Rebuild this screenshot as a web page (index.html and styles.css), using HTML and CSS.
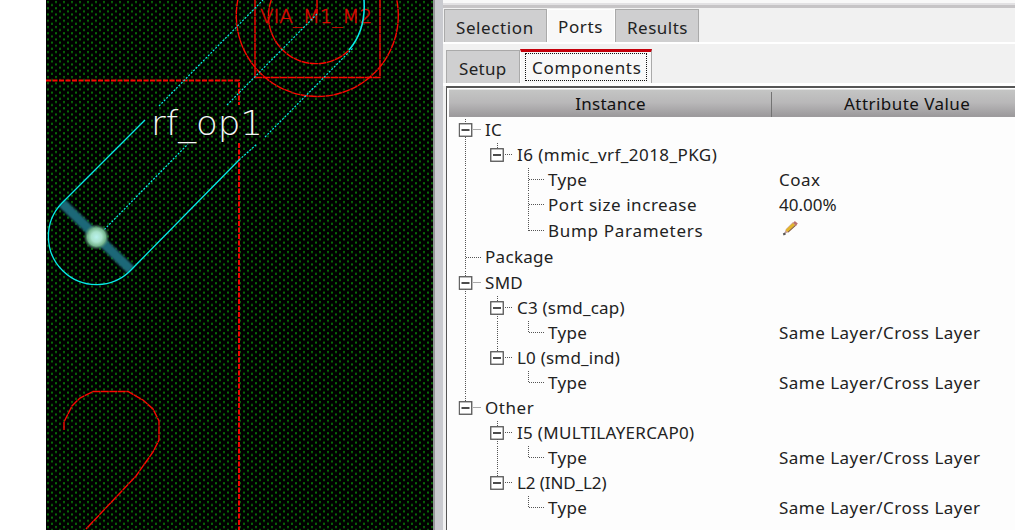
FILE: index.html
```html
<!DOCTYPE html>
<html lang="en">
<head>
<meta charset="utf-8">
<title>Ports</title>
<link rel="stylesheet" href="styles.css">
</head>
<body>
<svg width="0" height="0" class="defs">
  <defs>
    <symbol id="b" viewBox="0 0 28 14" width="28" height="14"><rect x=".75" y=".75" width="12.5" height="12.5" fill="#fff" stroke="#555" stroke-width="1.3"/><path d="M3 7H11" stroke="#111" stroke-width="1.5"/><path class="dot" d="M15 6.5H22"/></symbol>
  </defs>
</svg>
<div class="app">
  <svg class="canvas" width="387" height="530" viewBox="46 0 387 530">
    <defs>
      <pattern id="dots" x="46" y="300" width="8" height="6.25" patternUnits="userSpaceOnUse">
        <rect x="1" y="1" width="2" height="2" fill="#086c08"/><rect x="5" y="4.1" width="2" height="2" fill="#086c08"/>
      </pattern>
      <radialGradient id="ball"><stop offset="0" stop-color="#b9f2ee"/><stop offset=".4" stop-color="#a9e2cc"/><stop offset=".7" stop-color="#75b58e"/><stop offset="1" stop-color="#3f7a66" stop-opacity="0"/></radialGradient>
      <filter id="soft" x="-20%" y="-20%" width="140%" height="140%"><feGaussianBlur stdDeviation="1.3"/></filter>
    </defs>
    <rect x="46" width="387" height="530" fill="#000"/>
    <rect x="46" width="387" height="530" fill="url(#dots)"/>
    <g class="red">
      <path class="edge" d="M46 80.5H239V105M239 143V530"/>
      <circle cx="317.3" cy="15.5" r="81"/>
      <path d="M255 0V77.5H380V0M317 0V14M271.3 0A47.5 47.5 0 0 0 349 50.3"/>
      <path d="M64 430V422L72 406L80 398L93 391.5H128L143 400L153 409L159 421V440L153 452L136 476L86 529"/>
      <text class="via" x="260" y="22.5" textLength="112" lengthAdjust="spacingAndGlyphs">VIA_M1_M2</text>
    </g>
    <path d="M62 203L131 270" stroke="#1d6878" stroke-width="9.5" filter="url(#soft)"/>
    <g class="cyan">
      <path d="M145 120L62 203A47.3 47.3 0 0 0 131 270L239 160"/>
      <path d="M364 0Q366 30 349 50" stroke-width="1.6"/>
      <path class="dash" d="M159 106L263 0M97 237L188 144M227 105L317 14M239 160L257 144M265 137L353 48"/>
    </g>
    <circle cx="96.5" cy="237" r="13" fill="url(#ball)"/>
    <text class="net" x="151" y="135" textLength="112" lengthAdjust="spacingAndGlyphs">rf_op1</text>
  </svg>
  <div class="splitter"></div>
  <main class="panel">
    <div class="strip"></div>
    <nav class="tabs"><span class="tab sel">Selection</span><span class="tab ports on">Ports</span><span class="tab res">Results</span></nav>
    <nav class="subtabs"><span class="tab setup">Setup</span><span class="tab comp on"><b>Components</b></span></nav>
    <section class="tree">
      <header><span class="h1">Instance</span><span class="h2">Attribute Value</span></header>
      <div class="row"><svg class="g"><path class="dot" d="M18.5 2V25"/><use href="#b" x="11.5" y="6"/></svg><span class="n0">IC</span></div>
      <div class="row"><svg class="g"><path class="dot" d="M18.5 1V25M50.5 1V6"/><use href="#b" x="43" y="6"/></svg><span class="n1 wide">I6 (mmic_vrf_2018_PKG)</span></div>
      <div class="row"><svg class="g"><path class="dot" d="M18.5 1V25M81.5 1V25M82 12.5H97"/></svg><span class="n2">Type</span><span class="v">Coax</span></div>
      <div class="row"><svg class="g"><path class="dot" d="M18.5 1V25M81.5 1V25M82 12.5H97"/></svg><span class="n2 wider">Port size increase</span><span class="v num">40.00%</span></div>
      <div class="row r27"><svg class="g"><path class="dot" d="M18.5 1V27M81.5 1V14M82 13.5H97"/></svg><span class="n2 widest">Bump Parameters</span><span class="v"><svg class="pen" width="22" height="20" viewBox="0 0 22 20"><path d="M5 15L7 10L14 3L18 6L10 13Z" fill="#c9a29c"/><path d="M7.5 12L15 5" stroke="#e3b52c" stroke-width="3"/><path d="M9 13.2L16.5 6.3" stroke="#75562e" stroke-width="1"/><path d="M15 3L18 5.5" stroke="#bc716e" stroke-width="2.5"/><path d="M4.2 15.5L6.5 14.5" stroke="#555" stroke-width="2"/></svg></span></div>
      <div class="row r26"><svg class="g"><path class="dot" d="M18.5 0V26M19 13.5H34"/></svg><span class="n0 pkg">Package</span></div>
      <div class="row"><svg class="g"><path class="dot" d="M18.5 1V25"/><use href="#b" x="11.5" y="6"/></svg><span class="n0">SMD</span></div>
      <div class="row"><svg class="g"><path class="dot" d="M18.5 1V25M50.5 1V25"/><use href="#b" x="43" y="6"/></svg><span class="n1 slim">C3 (smd_cap)</span></div>
      <div class="row"><svg class="g"><path class="dot" d="M18.5 1V25M50.5 1V25M81.5 1V12.5H97"/></svg><span class="n2">Type</span><span class="v">Same Layer/Cross Layer</span></div>
      <div class="row"><svg class="g"><path class="dot" d="M18.5 1V25M50.5 1V6"/><use href="#b" x="43" y="6"/></svg><span class="n1 slim">L0 (smd_ind)</span></div>
      <div class="row"><svg class="g"><path class="dot" d="M18.5 1V25M81.5 1V12.5H97"/></svg><span class="n2">Type</span><span class="v">Same Layer/Cross Layer</span></div>
      <div class="row"><svg class="g"><path class="dot" d="M18.5 1V6"/><use href="#b" x="11.5" y="6"/></svg><span class="n0 wider">Other</span></div>
      <div class="row"><svg class="g"><path class="dot" d="M50.5 1V25"/><use href="#b" x="43" y="6"/></svg><span class="n1">I5 (MULTILAYERCAP0)</span></div>
      <div class="row"><svg class="g"><path class="dot" d="M50.5 1V25M81.5 1V12.5H97"/></svg><span class="n2">Type</span><span class="v">Same Layer/Cross Layer</span></div>
      <div class="row"><svg class="g"><path class="dot" d="M50.5 1V6"/><use href="#b" x="43" y="6"/></svg><span class="n1 slimmer">L2 (IND_L2)</span></div>
      <div class="row"><svg class="g"><path class="dot" d="M81.5 1V12.5H97"/></svg><span class="n2">Type</span><span class="v">Same Layer/Cross Layer</span></div>
    </section>
  </main>
</div>
</body>
</html>
```
FILE: styles.css
```css
* { box-sizing: border-box; }
body { margin: 0; background: #fff; width: 1015px; height: 530px; overflow: hidden; font: 17px/25px "Noto Sans", sans-serif; color: #222; letter-spacing: .3px; }
.defs { display: none; }
.app { display: flex; height: 530px; padding-left: 46px; }
.canvas { flex: none; display: block; }
.red { fill: none; stroke: #f80800; stroke-width: 1.4; stroke-dasharray: 8 .5; }
.edge { stroke-width: 1.9; stroke-dasharray: 5 1.5; }
.via { font: 20px "DejaVu Sans Light", "DejaVu Sans", sans-serif; font-weight: 200; fill: #e00800; stroke: #e00800; stroke-width: .4; stroke-dasharray: none; letter-spacing: 0; }
.net { font: 33px "DejaVu Sans Light", "DejaVu Sans", sans-serif; font-weight: 200; fill: #f4f4f4; letter-spacing: 0; }
.cyan { fill: none; stroke: #08e8e8; stroke-width: 1.3; }
.dash { stroke-width: 1.2; stroke-dasharray: 2 1.5; }
.dot { fill: none; stroke: #555; stroke-width: 1; stroke-dasharray: 1 1; }
.splitter { flex: none; width: 10px; background: #c9cacf; border-left: 2px solid #96969a; }
.panel { flex: 1; min-width: 0; background: #f1f1f1; display: flex; flex-direction: column; }
.strip { height: 9px; flex: none; background: linear-gradient(#f8f8f8 0 3px, #e2e1e3 3px 5px, #c6c4c6 5px 8px, #f1f1f1 8px); }
.tabs { height: 35px; flex: none; display: flex; border-bottom: 2px solid #fff; padding-left: 1px; }
.tab { display: block; white-space: nowrap; background: #cfcfd0; border: 1.5px solid #aaa; border-bottom: 0; }
.on { background: #f8f8f8; border-color: #fff; }
.sel { width: 103px; padding: 5px 0 0 11px; letter-spacing: .6px; }
.ports { width: 68px; padding: 4px 0 0 10px; letter-spacing: .6px; }
.res { width: 84px; padding: 5px 0 0 11px; letter-spacing: .5px; }
.subtabs { height: 42px; flex: none; display: flex; padding: 5px 0 0 3px; border-bottom: 3px solid #fff; }
.setup { width: 74px; margin-top: 1px; padding: 5px 0 0 12px; }
.comp { width: 132px; border-top: 3px solid #c5000b; border-right: 1px solid #aaa; padding: 1px 4px 1px 4px; }
.comp b { display: block; height: 28px; border: 1px dotted #111; font-weight: 400; line-height: 28px; padding-left: 6px; letter-spacing: .7px; }
.tree { flex: 1; margin-left: 3px; background: #fdfdfd; border: 1px solid #555; border-width: 2px 0 0 1px; }
header { height: 29px; margin-left: 2px; background: linear-gradient(#fff 0 1px, #c4c5c4 2px, #b9b8b9 50%, #9d9b9d 95%); display: flex; line-height: 32px; color: #111; }
.h1 { width: 323px; text-align: center; background: linear-gradient(#737373, #737373) 100% 4px / 1px 100% no-repeat; }
.h2 { padding-left: 72px; letter-spacing: .45px; }
.row { height: 25px; display: flex; white-space: nowrap; line-height: 25px; }
.r27 { height: 27px; line-height: 27px; }
.r26 { height: 26px; line-height: 26px; }
.g { flex: none; width: 98px; height: 100%; margin-right: -98px; }
.n0, .n1, .n2 { width: 332px; flex: none; }
.n0 { padding-left: 38px; }
.n1 { padding-left: 70px; }
.n2 { padding-left: 101px; }
.wide { letter-spacing: .45px; }
.wider { letter-spacing: .55px; }
.widest { letter-spacing: .7px; }
.slim { letter-spacing: .2px; }
.slimmer { letter-spacing: -.1px; }
.v { letter-spacing: .48px; }
.num { letter-spacing: 0; }
.pen { display: block; margin-top: 2px; }
```
